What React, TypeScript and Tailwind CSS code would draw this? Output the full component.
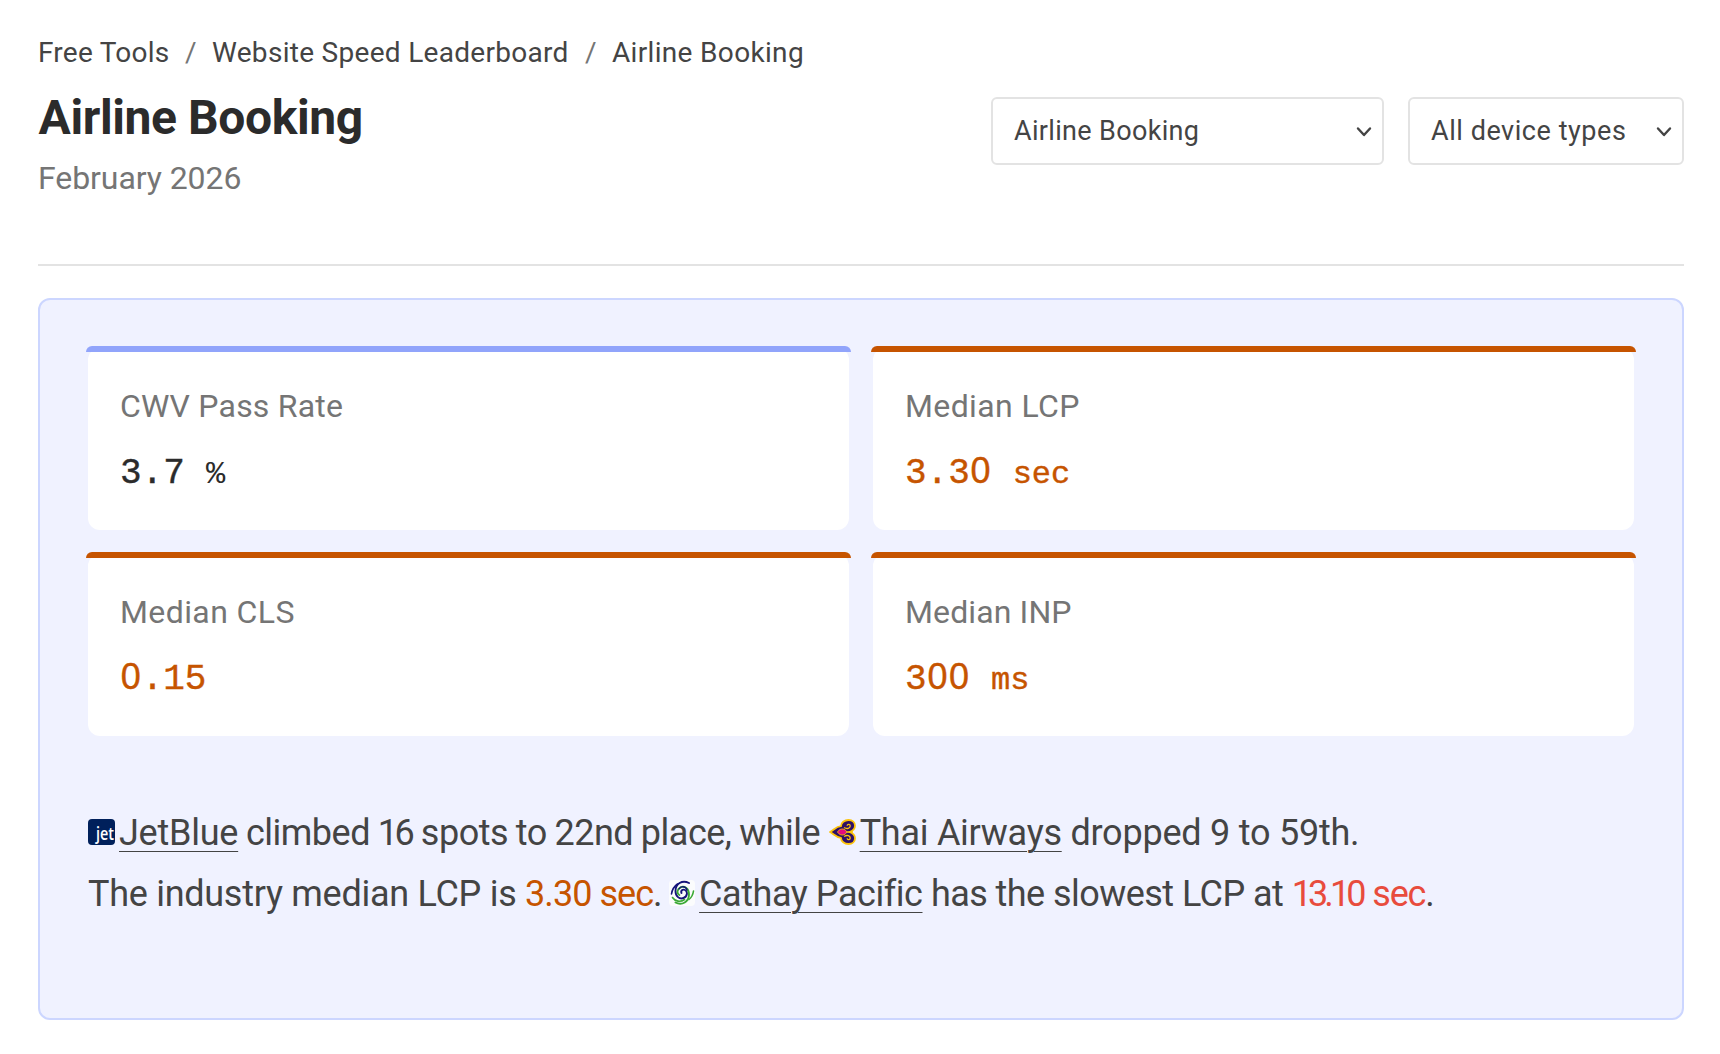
import React from 'react'

interface Metric {
  label: string
  value: string
  unit?: string
  barClassName: string
  valueClassName: string
  labelClassName: string
}

const metrics: Metric[] = [
  {
    label: 'CWV Pass Rate',
    value: '3.7',
    unit: '%',
    barClassName: 'bg-[#91a4fb]',
    valueClassName: 'text-[#2b2b2b]',
    labelClassName: 'tracking-[0.2px]',
  },
  {
    label: 'Median LCP',
    value: '3.30',
    unit: 'sec',
    barClassName: 'bg-[#c65400]',
    valueClassName: 'text-[#c65400]',
    labelClassName: 'tracking-[0.38px]',
  },
  {
    label: 'Median CLS',
    value: '0.15',
    barClassName: 'bg-[#c65400]',
    valueClassName: 'text-[#c65400]',
    labelClassName: 'tracking-[0.4px]',
  },
  {
    label: 'Median INP',
    value: '300',
    unit: 'ms',
    barClassName: 'bg-[#c65400]',
    valueClassName: 'text-[#c65400]',
    labelClassName: 'tracking-[0.12px]',
  },
]

// The mono face has a dotted zero, so zeros are set in the sans face at the same advance
const MetricValue: React.FC<{ value: string }> = ({ value }) => (
  <>
    {value.split(/(0+)/).map((part, index) =>
      part.startsWith('0') ? (
        <span
          key={index}
          className="-mr-[0.8px] ml-[0.8px] font-['Liberation_Sans',sans-serif] leading-none tracking-[1.6px]"
        >
          {part}
        </span>
      ) : (
        part
      )
    )}
  </>
)

const MetricCard: React.FC<{ metric: Metric }> = ({ metric }) => (
  <div className="relative h-[182px] rounded-[12px] bg-white px-8 pt-[34px]">
    <div className={`absolute -top-0.5 -right-0.5 -left-0.5 h-1.5 rounded-t-[6px] ${metric.barClassName}`} />
    <div className={`text-[32px] leading-[48px] text-[#757575] ${metric.labelClassName}`}>{metric.label}</div>
    <div
      className={`mt-[14px] font-['Liberation_Mono',monospace] text-[36px] leading-[60px] whitespace-pre [-webkit-text-stroke:0.4px] ${metric.valueClassName}`}
    >
      <MetricValue value={metric.value} />
      {metric.unit && (
        <span
          className={`ml-[2px] text-[32px] leading-none ${metric.unit === '%' ? '[-webkit-text-stroke:0px]' : ''}`}
        >
          {` ${metric.unit}`}
        </span>
      )}
    </div>
  </div>
)

const SelectBox: React.FC<{ label: string; className: string }> = ({ label, className }) => (
  <button
    className={`flex h-[68px] items-center justify-between rounded-[6px] border-2 border-[#e3e3e3] bg-white pr-[10px] pl-[21px] text-[27px] text-[#444] ${className}`}
  >
    <span>{label}</span>
    <svg className="mt-0.5 h-[12px] w-[16px]" viewBox="0 0 16 12" fill="none">
      <path d="M2 2.5 8 9l6-6.5" stroke="#444" strokeWidth="2.4" strokeLinecap="round" strokeLinejoin="round" />
    </svg>
  </button>
)

const JetBlueIcon = () => (
  <svg className="mr-1 inline-block h-[26px] w-[27px] overflow-visible align-baseline" viewBox="0 0 27 26">
    <rect width="27" height="26" rx="4" fill="#00205b" />
    <text
      x="8"
      y="20.500"
      fontSize="17.5"
      fontFamily="Open Sans, sans-serif"
      fontWeight="600"
      fill="#fff"
      textLength="18"
      lengthAdjust="spacingAndGlyphs"
    >
      jet
    </text>
  </svg>
)

const ThaiAirwaysIcon = () => (
  <svg className="mr-1 ml-[0.8px] inline-block h-[26px] w-[27px] align-baseline" viewBox="0 0 27 26">
    <path
      d="M1 13C5 11 7 7.500 12 7.200 12 3.500 15.500 1 19.500 1 23.500 1 26 3.500 26 6.800c0 3-2 5-5.500 6.200C24 14.200 26 16.200 26 19.200c0 3.300-2.500 5.800-6.500 5.800-4 0-7.500-2.500-7.500-6.200C7 18.500 5 15 1 13Z"
      fill="#2e1065"
      stroke="#fcc30b"
      strokeWidth="1.8"
      strokeLinejoin="round"
    />
    <path
      d="M15.500 8.800c2.500 1.400 5.700.6 5.700-1.800.1-1.800-2.200-2.200-3-.8M15.500 17.200c2.500-1.400 5.700-.6 5.700 1.800.1 1.800-2.200 2.200-3 .8"
      fill="none"
      stroke="#fcc30b"
      strokeWidth="1.3"
      strokeLinecap="round"
    />
    <path d="M17 12.200h7v1.600h-7Z" fill="#fcc30b" />
    <path
      d="M8.500 13c1.300-2.600 5-4 7.500-2.200 1 .7 1.500 1.500 1.500 2.200s-.5 1.500-1.500 2.200c-2.500 1.800-6.200.4-7.500-2.200Z"
      fill="#e5097f"
      stroke="#fcc30b"
      strokeWidth="0.8"
    />
  </svg>
)

const CathayPacificIcon = () => (
  <svg className="mr-1 ml-[0.8px] inline-block h-[26px] w-[26px] align-baseline" viewBox="0 0 26 26">
    <rect width="26" height="26" rx="4" fill="#fbfcfd" />
    <g fill="none" strokeWidth="1.9" strokeLinecap="round">
      <path d="M20 3C13-.5 6.500 4 6.500 11c0 5.500 4 8.500 8 7 4-1.500 4.500-6.500 1.500-8-2.500-1.200-4.500 1-3.500 3" stroke="#15157a" />
      <path d="M2.500 14C3 10 5 6.500 8.500 4" stroke="#15157a" strokeWidth="1.6" />
      <path d="M6.500 22.500C13 26 20 21.500 20 14.500c0-6-4.500-9-8.500-7.200-3.500 1.700-4 6.200-1.200 7.700" stroke="#3aa935" />
      <path d="M3.500 17.500C6 21.500 11.500 22.500 15.500 19.500M24.500 11c-.5 3.500-2 6.500-4.500 8.500" stroke="#3aa935" strokeWidth="1.6" />
      <path d="M10 9C12 5.500 17 6 18 10" stroke="#15157a" strokeWidth="1.4" />
    </g>
  </svg>
)

const linkClass = 'underline decoration-1 underline-offset-[6px]'

const App: React.FC = () => {
  return (
    <div className="min-h-[1054px] bg-white pt-[33px] pr-9 pl-[38px] font-['Roboto',sans-serif] text-[#444]">
      <nav className="flex text-[28px] leading-[40px]">
        <span className="w-[147px] tracking-[0.25px]">Free Tools</span>
        <span className="w-[27px] text-[#757575]">/</span>
        <span className="w-[373px] tracking-[0.3px]">Website Speed Leaderboard</span>
        <span className="w-[27px] text-[#757575]">/</span>
        <span className="tracking-[0.33px]">Airline Booking</span>
      </nav>

      <header className="mt-[15px] flex items-start justify-between border-b-2 border-[#e3e3e3] pb-[62px]">
        <div>
          <h1 className="ml-[0.6px] text-[48px] leading-[60px] font-bold tracking-[-0.4px] text-[#2b2b2b]">
            Airline Booking
          </h1>
          <div className="mt-1.5 text-[32px] leading-[48px] tracking-[-0.08px] text-[#757575]">February 2026</div>
        </div>
        <div className="mt-[9px] flex gap-6">
          <SelectBox label="Airline Booking" className="w-[393px] tracking-[0.33px]" />
          <SelectBox label="All device types" className="w-[276px] tracking-[0.55px]" />
        </div>
      </header>

      <section className="mt-8 h-[722px] rounded-[12px] border-2 border-[#ccd6ff] bg-[#f0f2ff] p-12">
        <div className="grid grid-cols-2 gap-6">
          {metrics.map((metric) => (
            <MetricCard key={metric.label} metric={metric} />
          ))}
        </div>

        <div className="mt-[67px] text-[36px] leading-[61px] whitespace-nowrap">
          <p>
            <JetBlueIcon />
            <a className={`tracking-[-0.24px] ${linkClass}`}>JetBlue</a>
            <span className="tracking-[-0.5px] [word-spacing:-0.7px]">
              {' climbed '}
              <span className="mr-[2px] tracking-[-3.5px]">16</span>
              {' spots to 22nd place, while '}
            </span>
            <ThaiAirwaysIcon />
            <a className={`tracking-[-0.27px] ${linkClass}`}>Thai Airways</a>
            <span className="tracking-[-0.23px]"> dropped 9 to 59th.</span>
          </p>
          <p>
            <span className="tracking-[-0.28px]">The industry median LCP is </span>
            <span className="tracking-[-0.96px] text-[#c65400]">3.30 sec</span>
            <span className="tracking-[-1.6px]">. </span>
            <CathayPacificIcon />
            <a className={`tracking-[-0.45px] ${linkClass}`}>Cathay Pacific</a>
            <span className="tracking-[-0.55px]"> has the slowest LCP at </span>
            <span className="tracking-[-1.2px] text-[#e84c3d]">
              <span className="mr-[2px] tracking-[-3.9px]">13.10</span> sec
            </span>
            .
          </p>
        </div>
      </section>
    </div>
  )
}

export default App
